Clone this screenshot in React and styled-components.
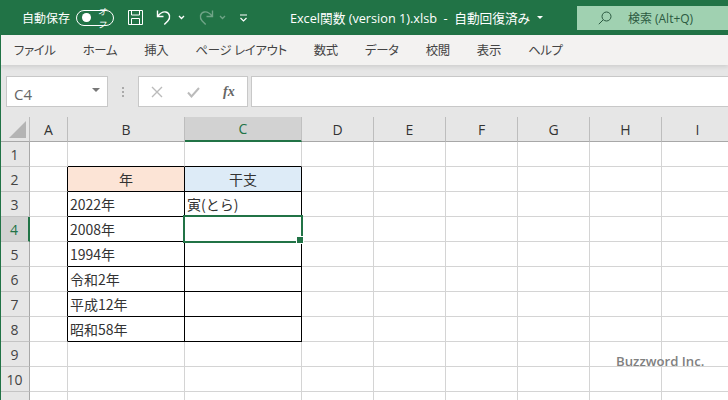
import styled, { createGlobalStyle } from 'styled-components';

const GlobalStyle = createGlobalStyle`
html, body { margin: 0; padding: 0; background: #fff; }
body { font-family: "Open Sans", "Noto Sans CJK JP", sans-serif; }
* { box-sizing: border-box; }
`;

const COLUMNS = ['A', 'B', 'C', 'D', 'E', 'F', 'G', 'H', 'I'];
const ROWS = [1, 2, 3, 4, 5, 6, 7, 8, 9, 10, 11];
const MENU = ['ファイル', 'ホーム', '挿入', 'ページ レイアウト', '数式', 'データ', '校閲', '表示', 'ヘルプ'];
const YEARS = { 3: '2022年', 4: '2008年', 5: '1994年', 6: '令和2年', 7: '平成12年', 8: '昭和58年' };

const Page = styled.div`
  position: relative;
  width: 728px;
  height: 400px;
  overflow: hidden;
  background: #e6e6e6;
  &::before {
    content: '';
    position: absolute;
    left: 0;
    top: 35px;
    bottom: 0;
    width: 1px;
    background: #217346;
    z-index: 3;
  }
`;
const TitleBar = styled.div`
  height: 35px;
  background: #217346;
  color: #fff;
  display: flex;
  align-items: center;
  padding-left: 22px;
  font-size: 12px;
`;
const AutoSave = styled.span`
  width: 49px;
  font-feature-settings: "palt";
  white-space: nowrap;
`;
const Toggle = styled.div`
  width: 38px;
  height: 16px;
  margin-left: 6px;
  border: 1px solid #fff;
  border-radius: 8px;
  display: flex;
  align-items: center;
  padding-left: 5px;
  gap: 7px;
  font-size: 9px;
  font-style: italic;
  font-feature-settings: "palt";
  &::before {
    content: '';
    width: 9px;
    height: 9px;
    border-radius: 50%;
    background: #fff;
  }
`;
const QuickIcon = styled.svg`
  flex: none;
  margin-left: ${({ $gap }) => $gap}px;
  opacity: ${({ $dim }) => ($dim ? 0.35 : 1)};
`;
const FileTitle = styled.span`
  margin-left: 42px;
  width: 249px;
  white-space: pre;
  font-size: 12.7px;
  display: flex;
  align-items: center;
  font-feature-settings: "palt";
`;
const Search = styled.div`
  width: 153px;
  height: 24px;
  margin-left: 38px;
  margin-top: 1px;
  background: #a0d1b1;
  color: #2c5a41;
  display: flex;
  align-items: center;
  padding-left: 21px;
  font-size: 12px;
  gap: 16px;
`;
const MenuBar = styled.div`
  height: 30px;
  background: #f3f2f1;
  display: flex;
  align-items: center;
  gap: 27px;
  padding: 0 0 0 14px;
  color: #444;
  font-size: 12.4px;
  box-shadow: 0 2px 4px rgba(0, 0, 0, 0.1);
  position: relative;
  font-feature-settings: "palt";
`;
const MenuItem = styled.span`
  white-space: pre;
  letter-spacing: -0.3px;
`;
const FormulaBar = styled.div`
  height: 52px;
  padding: 11px 0 10px 6px;
  display: flex;
`;
const NameBox = styled.div`
  width: 102px;
  border: 1px solid #c8c8c8;
  background: #fff;
  display: flex;
  align-items: center;
  justify-content: space-between;
  padding: 4px 7px 0 7px;
  font-size: 15px;
  color: #666;
  &::after {
    content: '';
    margin-top: -8px;
    border: 4px solid transparent;
    border-top: 4px solid #777;
    border-bottom: 0;
  }
`;
const Dots = styled.div`
  width: 30px;
  display: flex;
  flex-direction: column;
  align-items: center;
  justify-content: center;
  gap: 2px;
  i {
    width: 2px;
    height: 2px;
    background: #aaa;
  }
`;
const FxBox = styled.div`
  width: 110px;
  border: 1px solid #c8c8c8;
  background: #fff;
  display: flex;
  align-items: center;
  padding-left: 12px;
`;
const MarkIcon = styled.svg`
  margin-left: ${({ $gap }) => $gap || 0}px;
`;
const FxLabel = styled.span`
  margin-left: 23px;
  font-family: "Liberation Serif", serif;
  font-style: italic;
  font-weight: bold;
  font-size: 14px;
  color: #666;
`;
const FormulaInput = styled.div`
  flex: 1;
  margin-left: 3px;
  border: 1px solid #c8c8c8;
  border-right: 0;
  background: #fff;
`;
const Sheet = styled.div`
  display: grid;
  grid-template-columns: 30px 38px 117px 117px 72px 72px 72px 72px 72px 72px;
  grid-template-rows: 25px repeat(11, 25px);
  width: 735px;
  background: #fff;
  font-family: "Noto Sans CJK JP", sans-serif;
  font-size: 14px;
  color: #333;
`;
const Corner = styled.div`
  background: #e6e6e6;
  border-right: 1px solid #bbb;
  border-bottom: 1px solid #a8a8a8;
  display: flex;
  align-items: flex-end;
  justify-content: flex-end;
  padding: 0 3px 3px 0;
  &::after {
    content: '';
    border-style: solid;
    border-width: 0 0 17px 17px;
    border-color: transparent transparent #b4b4b4 transparent;
  }
`;
const ColHead = styled.div`
  background: ${({ $active }) => ($active ? '#d2d2d2' : '#e6e6e6')};
  color: ${({ $active }) => ($active ? '#217346' : '#333')};
  border-right: 1px solid ${({ $active }) => ($active ? '#c0c0c0' : '#bdbdbd')};
  border-bottom: ${({ $active }) => ($active ? '2px solid #217346' : '1px solid #a8a8a8')};
  font-family: "Open Sans", sans-serif;
  font-size: 14px;
  display: flex;
  align-items: center;
  justify-content: center;
`;
const RowHead = styled.div`
  background: ${({ $active }) => ($active ? '#d2d2d2' : '#e6e6e6')};
  color: ${({ $active }) => ($active ? '#217346' : '#444')};
  border-right: ${({ $active }) => ($active ? '2px solid #217346' : '1px solid #a8a8a8')};
  border-bottom: 1px solid #c4c4c4;
  font-family: "Open Sans", sans-serif;
  font-size: 14px;
  display: flex;
  align-items: center;
  justify-content: center;
`;
const Cell = styled.div`
  position: relative;
  background: ${({ $fill }) => $fill || '#fff'};
  border-right: 1px solid ${({ $right }) => ($right ? '#000' : '#d4d4d4')};
  border-bottom: 1px solid ${({ $bottom }) => ($bottom ? '#000' : '#d4d4d4')};
  display: flex;
  align-items: center;
  justify-content: ${({ $center }) => ($center ? 'center' : 'flex-start')};
  padding-left: ${({ $center }) => ($center ? 0 : 2)}px;
  white-space: nowrap;
`;
const Selection = styled.div`
  position: absolute;
  left: -2px;
  top: -2px;
  right: -2px;
  bottom: -2px;
  border: 2px solid #217346;
  z-index: 2;
  &::after {
    content: '';
    position: absolute;
    right: -3px;
    bottom: -3px;
    width: 6px;
    height: 6px;
    background: #217346;
    border: 1px solid #fff;
  }
`;
const Watermark = styled.div`
  position: absolute;
  left: 616px;
  top: 352px;
  font-family: "Open Sans", sans-serif;
  font-size: 13.2px;
  font-weight: 600;
  color: #808080;
  white-space: nowrap;
`;

function cellContent(row, col) {
  if (col === 'B' && row === 2) return '年';
  if (col === 'C' && row === 2) return '干支';
  if (col === 'B') return YEARS[row];
  if (col === 'C' && row === 3) return '寅(とら)';
  return null;
}

function cellFill(row, col) {
  if (row !== 2) return undefined;
  if (col === 'B') return '#fce4d6';
  if (col === 'C') return '#ddebf7';
  return undefined;
}

const App = () => {
  const inTable = (row, col) => (col === 'B' || col === 'C') && row >= 2 && row <= 8;

  return (
    <Page>
      <GlobalStyle />
      <TitleBar>
        <AutoSave>自動保存</AutoSave>
        <Toggle>オフ</Toggle>
        <QuickIcon $gap={13} width="17" height="17" viewBox="0 0 17 17" fill="none" stroke="#fff" strokeWidth="1">
          <path d="M1.5 1.5h14v14h-14zM4.5 1.5v4.5h8v-4.5M4.5 15.5v-6h8v6" />
        </QuickIcon>
        <QuickIcon $gap={12} width="17" height="17" viewBox="0 0 17 17" fill="none" stroke="#fff" strokeWidth="1.4">
          <path d="M1.5 1.5v6h6M1.8 7.2c2.5-3.2 5.2-4.8 8-4.2 4.2 1 5 6 2 9l-3.5 3.5" />
        </QuickIcon>
        <QuickIcon $gap={5} width="7" height="5" viewBox="0 0 7 5" fill="none" stroke="#fff" strokeWidth="1.3">
          <path d="M1 1l2.5 2.5L6 1" />
        </QuickIcon>
        <QuickIcon $dim $gap={12} width="17" height="17" viewBox="0 0 17 17" fill="none" stroke="#fff" strokeWidth="1.4">
          <path d="M15.5 1.5v6h-6M15.2 7.2c-2.5-3.2-5.2-4.8-8-4.2-4.2 1-5 6-2 9l3.5 3.5" />
        </QuickIcon>
        <QuickIcon $dim $gap={5} width="7" height="5" viewBox="0 0 7 5" fill="none" stroke="#fff" strokeWidth="1.3">
          <path d="M1 1l2.5 2.5L6 1" />
        </QuickIcon>
        <QuickIcon $gap={13} width="9" height="8" viewBox="0 0 9 8" fill="none" stroke="#fff" strokeWidth="1.2">
          <path d="M1 1h7M1.5 4l3 3 3-3" />
        </QuickIcon>
        <FileTitle>
          Excel関数 (version 1).xlsb  -  自動回復済み
          <QuickIcon $gap={7} width="6" height="3" viewBox="0 0 6 3" fill="#fff" stroke="none">
            <path d="M0 0h6L3 3z" />
          </QuickIcon>
        </FileTitle>
        <Search>
          <svg width="14" height="14" viewBox="0 0 14 14" fill="none" stroke="#2c5a41" strokeWidth="1">
            <circle cx="8.5" cy="5.5" r="4.5" />
            <path d="M5.2 8.8L0.8 13.2" />
          </svg>
          検索 (Alt+Q)
        </Search>
      </TitleBar>
      <MenuBar>
        {MENU.map((item) => (
          <MenuItem key={item}>{item}</MenuItem>
        ))}
      </MenuBar>
      <FormulaBar>
        <NameBox>C4</NameBox>
        <Dots>
          <i />
          <i />
          <i />
        </Dots>
        <FxBox>
          <MarkIcon width="12" height="12" viewBox="0 0 12 12" fill="none" stroke="#bbb" strokeWidth="1.4">
            <path d="M1 1l10 10M11 1L1 11" />
          </MarkIcon>
          <MarkIcon $gap={24} width="13" height="12" viewBox="0 0 13 12" fill="none" stroke="#bbb" strokeWidth="2">
            <path d="M1 6.5l3.5 4L12 2" />
          </MarkIcon>
          <FxLabel>fx</FxLabel>
        </FxBox>
        <FormulaInput />
      </FormulaBar>
      <Sheet>
        <Corner />
        {COLUMNS.map((col) => (
          <ColHead key={col} $active={col === 'C'}>{col}</ColHead>
        ))}
        {ROWS.map((row) => [
          <RowHead key={row} $active={row === 4}>{row}</RowHead>,
          ...COLUMNS.map((col) => (
            <Cell
              key={col + row}
              $fill={cellFill(row, col)}
              $center={row === 2}
              $right={inTable(row, col) || (col === 'A' && row >= 2 && row <= 8)}
              $bottom={inTable(row, col) || ((col === 'B' || col === 'C') && row === 1)}
            >
              {cellContent(row, col)}
              {col === 'C' && row === 4 && <Selection />}
            </Cell>
          )),
        ])}
      </Sheet>
      <Watermark>Buzzword Inc.</Watermark>
    </Page>
  );
};

export default App;
